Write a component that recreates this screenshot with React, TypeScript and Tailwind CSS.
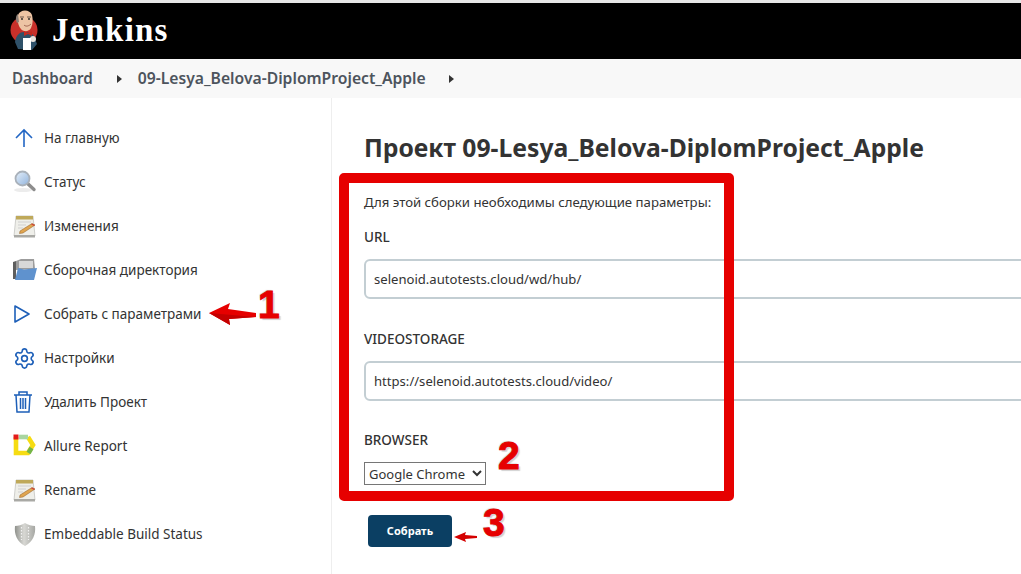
import React from "react";
import { Settings } from "lucide-react";

const font = "font-['Noto_Sans','Open_Sans',sans-serif]";

function JenkinsLogo() {
  return (
    <svg width="30" height="44" viewBox="0 0 30 44">
      <circle cx="14" cy="21" r="13.5" fill="#c8302a" />
      {/* jacket */}
      <path d="M5 33 C6 26 10 23 14 23 C20 23 24 25 25 30 L27 35 L22 41 L8 40 Z" fill="#2f5169" />
      {/* head */}
      <path d="M8 6 C10 0 20 0 22 6 C23 10 23 15 21 19 C19 23 13 23 11 20 C9 18 7 13 8 6 Z" fill="#edc4a4" />
      <path d="M7 14 C5 10 6 6 8 5 L9 13 Z" fill="#8d8078" />
      <path d="M10 8 H14 M17 8 H21" stroke="#4a3a32" strokeWidth="0.8" />
      <circle cx="12" cy="10" r="0.9" fill="#222" />
      <circle cx="19" cy="10" r="0.9" fill="#222" />
      <path d="M14 16 C16 18 19 17 21 15" stroke="#8a4a3a" strokeWidth="0.8" fill="none" />
      {/* bow tie */}
      <path d="M14 22 L18 24 L22 22 L22 27 L18 25 L14 27 Z" fill="#c42a20" />
      {/* hand and cup */}
      <circle cx="23" cy="30" r="3" fill="#e8e2dc" />
      <rect x="13" y="29" width="8" height="12" fill="#ffffff" />
    </svg>
  );
}

function Caret() {
  return (
    <svg width="5" height="8" viewBox="0 0 5 8">
      <path d="M0 0 L5 4 L0 8 Z" fill="#333" />
    </svg>
  );
}

function ArrowUpIcon() {
  return (
    <svg width="22" height="22" viewBox="0 0 22 22" fill="none" stroke="#2266c4" strokeWidth="1.6">
      <path d="M11 20 V3 M3 11 L11 3 L19 11" />
    </svg>
  );
}

function SearchIcon() {
  return (
    <svg width="24" height="24" viewBox="0 0 24 24">
      <defs>
        <linearGradient id="lens" x1="0" y1="0" x2="1" y2="1">
          <stop offset="0" stopColor="#e6f0fa" />
          <stop offset="1" stopColor="#8fb2dc" />
        </linearGradient>
      </defs>
      <ellipse cx="10" cy="20" rx="9" ry="2" fill="#ececec" />
      <path d="M14 13 L21 19.5" stroke="#8d8d8d" strokeWidth="3.4" strokeLinecap="round" />
      <circle cx="9.5" cy="8.5" r="7" fill="url(#lens)" stroke="#a9b1ba" strokeWidth="1.8" />
    </svg>
  );
}

function NotepadIcon() {
  return (
    <svg width="24" height="24" viewBox="0 0 24 24">
      <path d="M3 2 H20 L22 22 H1 Z" fill="#efefea" stroke="#c4c4c0" strokeWidth="0.8" />
      <rect x="3" y="2" width="17" height="3.5" fill="#bfa95a" />
      <path d="M5 8 H18 M5 11 H13 M5 14 H10" stroke="#cfcfcf" />
      <path d="M7 17 L19 9.5 L22 11 L10 19 L6.5 19.5 Z" fill="#e0a550" stroke="#8c5a22" strokeWidth="0.5" />
      <path d="M19 9.5 L22 11 L21 12 L18 10.2 Z" fill="#d0443a" />
      <rect x="1" y="21" width="21" height="2.5" fill="#a9a9a5" />
    </svg>
  );
}

function FolderIcon() {
  return (
    <svg width="24" height="24" viewBox="0 0 24 24">
      <path d="M0 4 L3 3 L3 21 L0 21 Z" fill="#5e5e5e" />
      <path d="M3 3 L8 1 L21 1 L22 11 L3 12 Z" fill="#9c9c9c" />
      <path d="M6 3 L20 3 L20 10 L6 10 Z" fill="#d8d8d8" />
      <path d="M2 22 L5 10 L11 11.5 L24 10 L21 22 Z" fill="#5f92ce" />
    </svg>
  );
}

function PlayIcon() {
  return (
    <svg width="18" height="20" viewBox="0 0 18 20" fill="none" stroke="#1d5fb8" strokeWidth="1.6" strokeLinejoin="round">
      <path d="M2 2 L16 10 L2 18 Z" />
    </svg>
  );
}

function TrashIcon() {
  return (
    <svg width="20" height="24" viewBox="0 0 20 24" fill="none" stroke="#1d5fb8" strokeWidth="1.5">
      <path d="M1 5 H19 M6 5 V2 H14 V5" />
      <path d="M3 5 L4 22 H16 L17 5" />
      <path d="M7.5 8 V19 M10 8 V19 M12.5 8 V19" />
    </svg>
  );
}

function AllureIcon() {
  return (
    <svg width="24" height="24" viewBox="0 0 24 24" fill="none" strokeWidth="4.6">
      <path d="M3 3 V19 H15 L20 11 L15 3" stroke="#f6dc12" />
      <path d="M6 3 H15" stroke="#a9d6a0" />
      <path d="M15.5 19 L18.5 14" stroke="#74b548" />
      <rect x="0.5" y="0.5" width="5" height="5" fill="#e31b1b" stroke="none" />
    </svg>
  );
}

function ShieldIcon() {
  return (
    <svg width="24" height="24" viewBox="0 0 24 24">
      <defs>
        <linearGradient id="steel" x1="0" y1="0" x2="1" y2="0">
          <stop offset="0" stopColor="#8f918c" />
          <stop offset="0.45" stopColor="#d8d8d4" />
          <stop offset="1" stopColor="#a6a7a3" />
        </linearGradient>
      </defs>
      <path d="M12 1 C9 3 5 4 2 4 C1 12 4 20 12 24 C20 20 23 12 22 4 C19 4 15 3 12 1 Z" fill="url(#steel)" />
      <path d="M8.5 5 V18 M15.5 5 V18" stroke="#f2f2f2" strokeWidth="1.2" strokeDasharray="1.5 1.5" />
    </svg>
  );
}

function RedArrow({ size }: { size: "big" | "small" }) {
  if (size === "big") {
    return (
      <svg width="48" height="25" viewBox="0 0 48 25">
        <path d="M0 11 L21 1 L19 7 L47 11 L47 15 L20 17 L21 23 Z" fill="#e60000" />
        <path d="M0 11 L47 15 L20 17 L21 23 Z" fill="#c40000" />
      </svg>
    );
  }
  return (
    <svg width="24" height="11" viewBox="0 0 24 11">
      <path d="M0 5 L12 0 L11 3 L23 4 L23 6 L11 7 L12 10 Z" fill="#d40000" />
    </svg>
  );
}

const sideItems = [
  { label: "На главную", icon: <ArrowUpIcon /> },
  { label: "Статус", icon: <SearchIcon /> },
  { label: "Изменения", icon: <NotepadIcon /> },
  { label: "Сборочная директория", icon: <FolderIcon /> },
  { label: "Собрать с параметрами", icon: <PlayIcon /> },
  { label: "Настройки", icon: <Settings size={23} color="#1d5fb8" strokeWidth={1.7} /> },
  { label: "Удалить Проект", icon: <TrashIcon /> },
  { label: "Allure Report", icon: <AllureIcon /> },
  { label: "Rename", icon: <NotepadIcon /> },
  { label: "Embeddable Build Status", icon: <ShieldIcon /> },
];

const numberClass =
  "absolute font-['Liberation_Sans',sans-serif] font-bold text-[39px] leading-none text-[#e60000] [-webkit-text-stroke:1px_#e60000] [text-shadow:-1px_-1px_1px_rgba(0,0,0,0.18),2px_2px_1px_rgba(0,0,0,0.18)]";

function App() {
  return (
    <div className={`relative w-[1021px] h-[574px] overflow-hidden bg-white text-[#333] ${font}`}>
      <div className="h-[3px] bg-[#e6e6e6]" />
      <header className="h-[56px] bg-black flex items-center pl-[10px] gap-[12px]">
        <JenkinsLogo />
        <span className="font-['Liberation_Serif',serif] font-bold text-[33px] tracking-[1.2px] text-white">Jenkins</span>
      </header>
      <div className="h-[39px] bg-[#f8f8f8] flex items-center pl-[12px] font-semibold text-[#4d545d]">
        <span className="text-[15.2px]">Dashboard</span>
        <span className="ml-[24px] mr-[16px] flex items-center"><Caret /></span>
        <span className="text-[15.7px]">09-Lesya_Belova-DiplomProject_Apple</span>
        <span className="ml-[23px] flex items-center"><Caret /></span>
      </div>
      <div className="flex h-[476px]">
        <aside className="w-[332px] shrink-0 border-r border-[#eeeeee] pt-[18px]">
          {sideItems.map((item) => (
            <div key={item.label} className="h-[44px] flex items-center text-[13.5px] text-[#333]">
              <div className="w-[44px] pl-[13px] flex items-center">{item.icon}</div>
              <span className="leading-[20px]">{item.label}</span>
            </div>
          ))}
        </aside>
        <main className="flex-1 pl-[32px] pt-[33px] min-w-0">
          <h1 className="text-[24.7px] leading-[34px] font-bold text-[#333] whitespace-nowrap">Проект 09-Lesya_Belova-DiplomProject_Apple</h1>
          <p className="mt-[28px] text-[13.2px] leading-[18px] text-[#333]">Для этой сборки необходимы следующие параметры:</p>
          <label className="block mt-[17px] text-[13.5px] leading-[18px] font-medium">URL</label>
          <input
            readOnly
            value="selenoid.autotests.cloud/wd/hub/"
            className="block mt-[13px] w-[700px] h-[40px] pl-[8px] border-2 border-[#c3ced3] rounded-[6px] text-[13.1px] text-[#333] outline-none"
          />
          <label className="block mt-[31px] text-[13.5px] leading-[18px] font-medium">VIDEOSTORAGE</label>
          <input
            readOnly
            value="https://selenoid.autotests.cloud/video/"
            className="block mt-[13px] w-[700px] h-[40px] pl-[8px] border-2 border-[#c3ced3] rounded-[6px] text-[13.1px] text-[#333] outline-none"
          />
          <label className="block mt-[30px] text-[13.5px] leading-[18px] font-medium">BROWSER</label>
          <select className="block mt-[13px] w-[122px] h-[23px] border border-[#767676] text-[13px] text-[#333] bg-white outline-none appearance-auto">
            <option>Google Chrome</option>
          </select>
          <button className="block mt-[30px] ml-[4px] w-[84px] h-[32px] rounded-[4px] bg-[#0b3f63] text-white text-[11px] font-bold">Собрать</button>
        </main>
      </div>

      {/* annotations drawn over the page */}
      <div className="absolute left-[339px] top-[173px] w-[395px] h-[328px] border-[10px] border-[#e60000] rounded-[5px] pointer-events-none" />
      <div className="absolute left-[209px] top-[302px]"><RedArrow size="big" /></div>
      <span className={`${numberClass} left-[258px] top-[285px]`}>1</span>
      <span className={`${numberClass} left-[498px] top-[436px]`}>2</span>
      <div className="absolute left-[454px] top-[532px]"><RedArrow size="small" /></div>
      <span className={`${numberClass} left-[483px] top-[503px]`}>3</span>
    </div>
  );
}

export default App;
